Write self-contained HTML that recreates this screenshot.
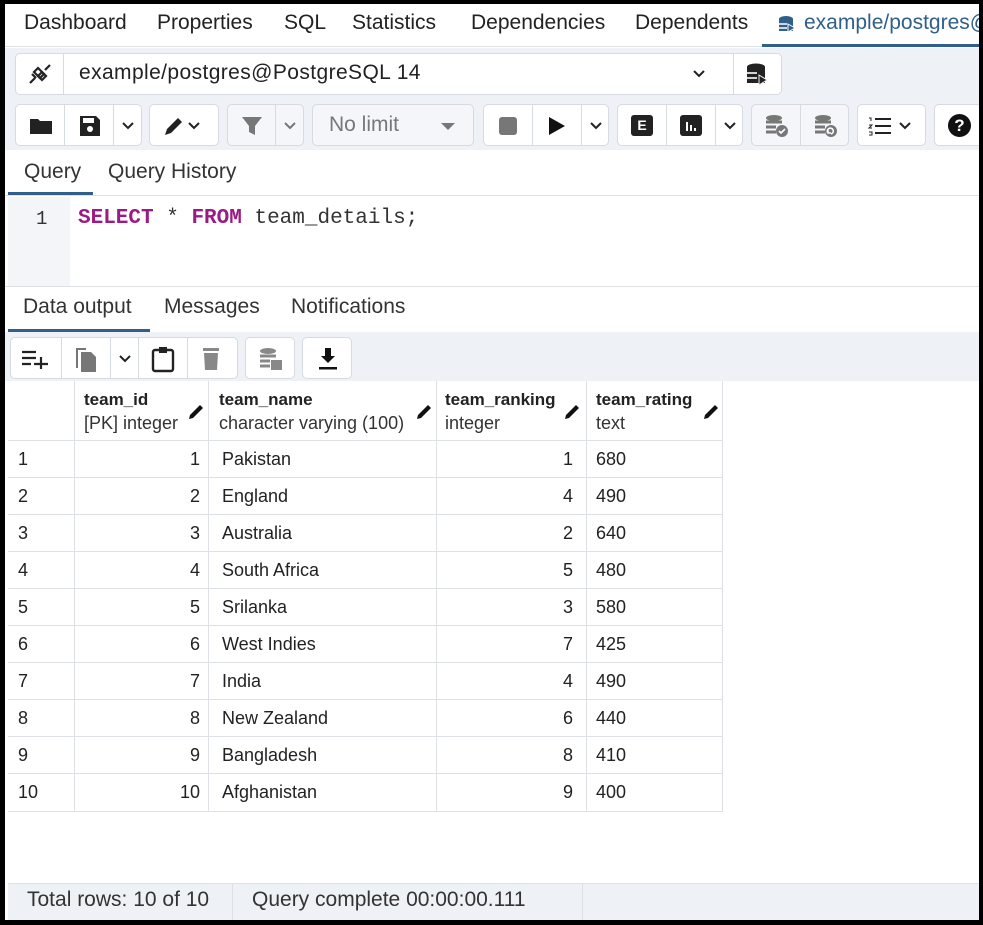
<!DOCTYPE html>
<html><head><meta charset="utf-8"><style>
*{box-sizing:border-box;margin:0;padding:0}
body{width:983px;height:925px;background:#000;position:relative;overflow:hidden;font-family:"Liberation Sans",sans-serif;color:#222}
.a{position:absolute}
#in{position:absolute;left:5px;top:4px;width:974px;height:916px;background:#fff;overflow:hidden}
.t{position:absolute;white-space:nowrap}
.btn{position:absolute;background:#fff;border:1px solid #d6dae1;border-radius:5px;overflow:hidden}
.dis{background:#f4f6f9}
.sep{position:absolute;top:0;bottom:0;width:1px;background:#d6dae1}
.ic{position:absolute}
.cell{position:absolute;height:37px;border-right:1px solid #dde1e6;border-bottom:1px solid #dde1e6;font-size:18px;line-height:36px;color:#222;white-space:nowrap}
.tb{font-size:21px;top:7px}
</style></head><body>
<div id="in">
<div class="a" style="left:0;top:0;width:974px;height:43px;background:#fff;border-bottom:1px solid #dde1e6"></div>
<div class="t tb" style="left:19px">Dashboard</div>
<div class="t tb" style="left:152px">Properties</div>
<div class="t tb" style="left:279px">SQL</div>
<div class="t tb" style="left:347px">Statistics</div>
<div class="t tb" style="left:466px">Dependencies</div>
<div class="t tb" style="left:630px">Dependents</div>
<svg class="ic" style="left:772px;top:11px" width="20" height="20" viewBox="0 0 20 20"><ellipse cx="9" cy="4" rx="7" ry="3" fill="#2f5f8a"/><rect x="2" y="4" width="14" height="12" fill="#2f5f8a"/><path d="M2 9h8M2 13h8" stroke="#fff" stroke-width="1.5"/><path d="M11 9l7 4-7 4z" fill="#2f5f8a" stroke="#fff" stroke-width="1"/></svg>
<div class="t tb" style="left:799px;color:#2f5f8a">example/postgres@PostgreSQL 14</div>
<div class="a" style="left:757px;top:40px;width:217px;height:3px;background:#2f5f8a"></div>

<div class="a" style="left:0;top:44px;width:974px;height:102px;background:#eef1f5"></div>
<div class="btn" style="left:10px;top:49px;width:767px;height:42px">
 <div class="sep" style="left:47px"></div><div class="sep" style="left:717px"></div>
 <svg class="ic" style="left:11px;top:8px" width="26" height="24" viewBox="0 0 26 24" fill="none" stroke="#222" stroke-width="2.2"><path d="M3 21l5-5M18 8l5-5"/><path d="M7 10l4-4 6 6-4 4z"/><path d="M11 14l4-4 4 4-4 4zM5 12l4 4"/></svg>
 <div class="t" style="left:63px;top:7px;font-size:21px;letter-spacing:0.4px;color:#222">example/postgres@PostgreSQL 14</div>
 <svg class="ic" style="left:676px;top:15px" width="14" height="10"><path d="M2 2l5 5 5-5" stroke="#222" stroke-width="2" fill="none"/></svg>
 <svg class="ic" style="left:730px;top:9px" width="22" height="24" viewBox="0 0 22 24"><ellipse cx="10" cy="4" rx="9" ry="3.5" fill="#222"/><rect x="1" y="4" width="18" height="16" fill="#222"/><path d="M1 10h10M1 15h10" stroke="#eee" stroke-width="1.8"/><path d="M13 12l8 5-8 5z" fill="#222" stroke="#eee" stroke-width="1"/></svg>
</div>

<div class="btn" style="left:10px;top:100px;width:127px;height:42px">
 <div class="sep" style="left:48px"></div><div class="sep" style="left:97px"></div>
 <svg class="ic" style="left:13px;top:12px" width="24" height="18" viewBox="0 0 24 18"><path d="M1 2h8l2 2h12v13H1z" fill="#222"/></svg>
 <svg class="ic" style="left:63px;top:10px" width="22" height="22" viewBox="0 0 22 22"><path d="M1 1h16l4 4v16H1z" fill="#222"/><rect x="4" y="3" width="11" height="5" fill="#fff"/><circle cx="11" cy="14" r="3" fill="#fff"/></svg>
 <svg class="ic" style="left:105px;top:16px" width="14" height="10"><path d="M2 2l5 5 5-5" stroke="#222" stroke-width="2" fill="none"/></svg>
</div>
<div class="btn" style="left:144px;top:100px;width:70px;height:42px">
 <svg class="ic" style="left:12px;top:10px" width="24" height="22" viewBox="0 0 24 22"><path d="M3 20l2-6 11-11 4 4-11 11z" fill="#222"/></svg>
 <svg class="ic" style="left:37px;top:16px" width="14" height="10"><path d="M2 2l5 5 5-5" stroke="#222" stroke-width="2" fill="none"/></svg>
</div>
<div class="btn dis" style="left:222px;top:100px;width:77px;height:42px">
 <div class="sep" style="left:47px"></div>
 <svg class="ic" style="left:13px;top:11px" width="22" height="20" viewBox="0 0 22 20"><path d="M1 1h20l-7 9v9l-6-3v-6z" fill="#777"/></svg>
 <svg class="ic" style="left:55px;top:16px" width="14" height="10"><path d="M2 2l5 5 5-5" stroke="#777" stroke-width="2" fill="none"/></svg>
</div>
<div class="btn dis" style="left:307px;top:100px;width:162px;height:42px">
 <div class="t" style="left:16px;top:8px;font-size:21px;color:#777">No limit</div>
 <svg class="ic" style="left:127px;top:17px" width="16" height="9"><path d="M1 1h14l-7 7z" fill="#777"/></svg>
</div>
<div class="btn" style="left:478px;top:100px;width:126px;height:42px">
 <div class="sep" style="left:48px"></div><div class="sep" style="left:97px"></div>
 <div class="a" style="left:15px;top:12px;width:18px;height:18px;background:#777;border-radius:3px"></div>
 <svg class="ic" style="left:64px;top:11px" width="18" height="20"><path d="M1 1l16 9-16 9z" fill="#111"/></svg>
 <svg class="ic" style="left:105px;top:16px" width="14" height="10"><path d="M2 2l5 5 5-5" stroke="#222" stroke-width="2" fill="none"/></svg>
</div>
<div class="btn" style="left:612px;top:100px;width:126px;height:42px">
 <div class="sep" style="left:48px"></div><div class="sep" style="left:97px"></div>
 <div class="a" style="left:13px;top:10px;width:22px;height:21px;background:#222;border-radius:3px;color:#fff;font-size:14px;font-weight:bold;text-align:center;line-height:21px">E</div>
 <div class="a" style="left:62px;top:10px;width:22px;height:21px;background:#222;border-radius:3px"><div class="a" style="left:6px;top:7px;width:2px;height:9px;background:#fff"></div><div class="a" style="left:10px;top:10px;width:2px;height:6px;background:#fff"></div><div class="a" style="left:14px;top:13px;width:2px;height:3px;background:#fff"></div></div>
 <svg class="ic" style="left:105px;top:16px" width="14" height="10"><path d="M2 2l5 5 5-5" stroke="#222" stroke-width="2" fill="none"/></svg>
</div>
<div class="btn dis" style="left:746px;top:100px;width:98px;height:42px">
 <div class="sep" style="left:48px"></div>
 <svg class="ic" style="left:12px;top:9px" width="26" height="24" viewBox="0 0 26 24"><ellipse cx="10" cy="4" rx="8" ry="3" fill="#777"/><path d="M2 8h16M2 13h10M2 18h10" stroke="#777" stroke-width="3"/><circle cx="18" cy="17" r="6" fill="#777"/><path d="M15 17l2 2 4-4" stroke="#fff" stroke-width="1.6" fill="none"/></svg>
 <svg class="ic" style="left:61px;top:9px" width="26" height="24" viewBox="0 0 26 24"><ellipse cx="10" cy="4" rx="8" ry="3" fill="#777"/><path d="M2 8h16M2 13h10M2 18h10" stroke="#777" stroke-width="3"/><circle cx="18" cy="17" r="6" fill="#777"/><path d="M15 19a3 3 0 1 1 3 1M15 16v3h3" stroke="#fff" stroke-width="1.5" fill="none"/></svg>
</div>
<div class="btn" style="left:852px;top:100px;width:69px;height:42px">
 <svg class="ic" style="left:10px;top:11px" width="24" height="20" viewBox="0 0 24 20"><path d="M7 3h16M7 10h16M7 17h16" stroke="#222" stroke-width="2"/><path d="M1 2h2v3M1 9h3l-3 3h3M1 16h3v3H1" stroke="#222" stroke-width="1" fill="none"/></svg>
 <svg class="ic" style="left:40px;top:16px" width="14" height="10"><path d="M2 2l5 5 5-5" stroke="#222" stroke-width="2" fill="none"/></svg>
</div>
<div class="btn" style="left:929px;top:100px;width:60px;height:42px">
 <div class="a" style="left:13px;top:9px;width:23px;height:23px;border-radius:50%;background:#111;color:#fff;font-weight:bold;font-size:17px;text-align:center;line-height:23px">?</div>
</div>

<div class="a" style="left:0;top:146px;width:974px;height:46px;background:#fff;border-bottom:1px solid #dde1e6"></div>
<div class="t" style="left:19px;top:156px;font-size:21px;color:#333">Query</div>
<div class="t" style="left:103px;top:156px;font-size:21px;color:#333">Query History</div>
<div class="a" style="left:3px;top:188px;width:85px;height:3px;background:#2f5f8a"></div>

<div class="a" style="left:3px;top:193px;width:62px;height:89px;background:#f3f5f8"></div>
<div class="t" style="left:31px;top:204px;font-size:19px;font-family:'Liberation Mono',monospace;color:#333">1</div>
<div class="t" style="left:73px;top:203px;font-size:21px;font-family:'Liberation Mono',monospace;color:#333"><b style="color:#9b1b85">SELECT</b> * <b style="color:#9b1b85">FROM</b> team_details;</div>
<div class="a" style="left:0;top:282px;width:974px;height:1px;background:#dde1e6"></div>

<div class="t" style="left:18px;top:291px;font-size:21px;color:#333">Data output</div>
<div class="t" style="left:159px;top:291px;font-size:21px;color:#333">Messages</div>
<div class="t" style="left:286px;top:291px;font-size:21px;color:#333">Notifications</div>
<div class="a" style="left:3px;top:325px;width:142px;height:3px;background:#2f5f8a"></div>
<div class="a" style="left:0;top:328px;width:974px;height:49px;background:#eef1f5"></div>
<div class="btn" style="left:5px;top:333px;width:228px;height:42px">
 <div class="sep" style="left:50px"></div><div class="sep" style="left:99px"></div><div class="sep" style="left:127px"></div><div class="sep" style="left:176px"></div>
 <svg class="ic" style="left:11px;top:11px" width="28" height="20"><path d="M0 3h14M0 9h14M0 15h9M12 15h14M19 8v14" stroke="#222" stroke-width="2.2"/></svg>
 <svg class="ic" style="left:63px;top:7px" width="24" height="28"><path d="M2 3h10v2H4v18H2z" fill="#777"/><path d="M7 7h10l5 5v15H7z" fill="#777"/></svg>
 <svg class="ic" style="left:107px;top:16px" width="14" height="10"><path d="M2 2l5 5 5-5" stroke="#222" stroke-width="2" fill="none"/></svg>
 <svg class="ic" style="left:140px;top:7px" width="24" height="28"><rect x="2" y="5" width="20" height="21" rx="2" fill="none" stroke="#222" stroke-width="2.4"/><rect x="8" y="2" width="8" height="6" fill="#222"/></svg>
 <svg class="ic" style="left:190px;top:9px" width="20" height="24"><rect x="2" y="1" width="16" height="3" fill="#888"/><path d="M3 6h14l-1 17H4z" fill="#888"/></svg>
</div>
<div class="btn" style="left:240px;top:333px;width:50px;height:42px">
 <svg class="ic" style="left:12px;top:9px" width="26" height="24"><ellipse cx="10" cy="4" rx="8" ry="3" fill="#888"/><path d="M2 9h16M2 14h10M2 19h10" stroke="#888" stroke-width="3"/><rect x="13" y="13" width="11" height="10" fill="#888"/></svg>
</div>
<div class="btn" style="left:297px;top:333px;width:50px;height:42px">
 <svg class="ic" style="left:15px;top:8px" width="20" height="26"><path d="M7 2h6v8h4l-7 7-7-7h4z" fill="#111"/><rect x="1" y="21" width="18" height="2.5" fill="#111"/></svg>
</div>

<div class="cell" style="left:3px;top:377px;width:67px;height:60px"></div>
<div class="cell" style="left:70px;top:377px;width:134px;height:60px"></div>
<div class="cell" style="left:204px;top:377px;width:228px;height:60px"></div>
<div class="cell" style="left:432px;top:377px;width:150px;height:60px"></div>
<div class="cell" style="left:582px;top:377px;width:136px;height:60px"></div>
<div class="t" style="left:79px;top:386px;font-size:17px;font-weight:bold;color:#222">team_id</div>
<div class="t" style="left:79px;top:409px;font-size:18px;color:#333">[PK] integer</div>
<div class="t" style="left:214px;top:386px;font-size:17px;font-weight:bold">team_name</div>
<div class="t" style="left:214px;top:409px;font-size:18px;color:#333">character varying (100)</div>
<div class="t" style="left:440px;top:386px;font-size:17px;font-weight:bold">team_ranking</div>
<div class="t" style="left:440px;top:409px;font-size:18px;color:#333">integer</div>
<div class="t" style="left:591px;top:386px;font-size:17px;font-weight:bold">team_rating</div>
<div class="t" style="left:591px;top:409px;font-size:18px;color:#333">text</div>
<svg class="ic" style="left:182px;top:399px" width="18" height="18"><path d="M2 16l1-4 10-10 3 3-10 10z" fill="#111"/></svg>
<svg class="ic" style="left:410px;top:399px" width="18" height="18"><path d="M2 16l1-4 10-10 3 3-10 10z" fill="#111"/></svg>
<svg class="ic" style="left:558px;top:399px" width="18" height="18"><path d="M2 16l1-4 10-10 3 3-10 10z" fill="#111"/></svg>
<svg class="ic" style="left:697px;top:399px" width="18" height="18"><path d="M2 16l1-4 10-10 3 3-10 10z" fill="#111"/></svg>

<div class="cell" style="left:3px;top:437px;width:67px">&nbsp;&nbsp;1</div><div class="cell" style="left:70px;top:437px;width:134px;text-align:right;padding-right:8px">1</div><div class="cell" style="left:204px;top:437px;width:228px;padding-left:13px">Pakistan</div><div class="cell" style="left:432px;top:437px;width:150px;text-align:right;padding-right:13px">1</div><div class="cell" style="left:582px;top:437px;width:136px;padding-left:9px">680</div>
<div class="cell" style="left:3px;top:474px;width:67px">&nbsp;&nbsp;2</div><div class="cell" style="left:70px;top:474px;width:134px;text-align:right;padding-right:8px">2</div><div class="cell" style="left:204px;top:474px;width:228px;padding-left:13px">England</div><div class="cell" style="left:432px;top:474px;width:150px;text-align:right;padding-right:13px">4</div><div class="cell" style="left:582px;top:474px;width:136px;padding-left:9px">490</div>
<div class="cell" style="left:3px;top:511px;width:67px">&nbsp;&nbsp;3</div><div class="cell" style="left:70px;top:511px;width:134px;text-align:right;padding-right:8px">3</div><div class="cell" style="left:204px;top:511px;width:228px;padding-left:13px">Australia</div><div class="cell" style="left:432px;top:511px;width:150px;text-align:right;padding-right:13px">2</div><div class="cell" style="left:582px;top:511px;width:136px;padding-left:9px">640</div>
<div class="cell" style="left:3px;top:548px;width:67px">&nbsp;&nbsp;4</div><div class="cell" style="left:70px;top:548px;width:134px;text-align:right;padding-right:8px">4</div><div class="cell" style="left:204px;top:548px;width:228px;padding-left:13px">South Africa</div><div class="cell" style="left:432px;top:548px;width:150px;text-align:right;padding-right:13px">5</div><div class="cell" style="left:582px;top:548px;width:136px;padding-left:9px">480</div>
<div class="cell" style="left:3px;top:585px;width:67px">&nbsp;&nbsp;5</div><div class="cell" style="left:70px;top:585px;width:134px;text-align:right;padding-right:8px">5</div><div class="cell" style="left:204px;top:585px;width:228px;padding-left:13px">Srilanka</div><div class="cell" style="left:432px;top:585px;width:150px;text-align:right;padding-right:13px">3</div><div class="cell" style="left:582px;top:585px;width:136px;padding-left:9px">580</div>
<div class="cell" style="left:3px;top:622px;width:67px">&nbsp;&nbsp;6</div><div class="cell" style="left:70px;top:622px;width:134px;text-align:right;padding-right:8px">6</div><div class="cell" style="left:204px;top:622px;width:228px;padding-left:13px">West Indies</div><div class="cell" style="left:432px;top:622px;width:150px;text-align:right;padding-right:13px">7</div><div class="cell" style="left:582px;top:622px;width:136px;padding-left:9px">425</div>
<div class="cell" style="left:3px;top:659px;width:67px">&nbsp;&nbsp;7</div><div class="cell" style="left:70px;top:659px;width:134px;text-align:right;padding-right:8px">7</div><div class="cell" style="left:204px;top:659px;width:228px;padding-left:13px">India</div><div class="cell" style="left:432px;top:659px;width:150px;text-align:right;padding-right:13px">4</div><div class="cell" style="left:582px;top:659px;width:136px;padding-left:9px">490</div>
<div class="cell" style="left:3px;top:696px;width:67px">&nbsp;&nbsp;8</div><div class="cell" style="left:70px;top:696px;width:134px;text-align:right;padding-right:8px">8</div><div class="cell" style="left:204px;top:696px;width:228px;padding-left:13px">New Zealand</div><div class="cell" style="left:432px;top:696px;width:150px;text-align:right;padding-right:13px">6</div><div class="cell" style="left:582px;top:696px;width:136px;padding-left:9px">440</div>
<div class="cell" style="left:3px;top:733px;width:67px">&nbsp;&nbsp;9</div><div class="cell" style="left:70px;top:733px;width:134px;text-align:right;padding-right:8px">9</div><div class="cell" style="left:204px;top:733px;width:228px;padding-left:13px">Bangladesh</div><div class="cell" style="left:432px;top:733px;width:150px;text-align:right;padding-right:13px">8</div><div class="cell" style="left:582px;top:733px;width:136px;padding-left:9px">410</div>
<div class="cell" style="left:3px;top:770px;width:67px;height:38px">&nbsp;&nbsp;10</div><div class="cell" style="left:70px;top:770px;width:134px;height:38px;text-align:right;padding-right:8px">10</div><div class="cell" style="left:204px;top:770px;width:228px;height:38px;padding-left:13px">Afghanistan</div><div class="cell" style="left:432px;top:770px;width:150px;height:38px;text-align:right;padding-right:13px">9</div><div class="cell" style="left:582px;top:770px;width:136px;height:38px;padding-left:9px">400</div>

<div class="a" style="left:3px;top:879px;width:971px;height:37px;background:#eef1f5;border-top:1px solid #dde1e6"></div>
<div class="a" style="left:227px;top:879px;width:1px;height:37px;background:#dde1e6"></div>
<div class="a" style="left:577px;top:879px;width:1px;height:37px;background:#dde1e6"></div>
<div class="t" style="left:22px;top:884px;font-size:21px;color:#333">Total rows: 10 of 10</div>
<div class="t" style="left:247px;top:884px;font-size:21px;color:#333">Query complete 00:00:00.111</div>
</div>
</body></html>
